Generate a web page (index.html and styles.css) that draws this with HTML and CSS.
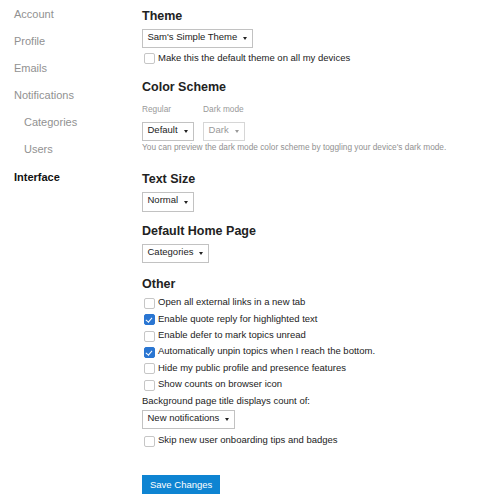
FILE: index.html
```html
<!DOCTYPE html>
<html lang="en">
<head>
  <meta charset="UTF-8" />
  <meta name="viewport" content="width=device-width, initial-scale=1.0" />
  <title>Interface Preferences</title>
  <link rel="stylesheet" href="styles.css">
</head>
<body>
  <div class="page">
    <ul class="sidebar">
      <li class="nav-item">Account</li>
      <li class="nav-item">Profile</li>
      <li class="nav-item">Emails</li>
      <li class="nav-item">Notifications</li>
      <li class="nav-item sub">Categories</li>
      <li class="nav-item sub">Users</li>
      <li class="nav-item active">Interface</li>
    </ul>

    <div class="main">
      <h2 class="heading theme-heading">Theme</h2>
      <div class="select">Sam's Simple Theme<span class="caret"></span></div>
      <div class="check-row theme-check"><span class="box"></span>Make this the default theme on all my devices</div>

      <h2 class="heading scheme-heading">Color Scheme</h2>
      <div class="scheme">
        <div class="scheme-col">
          <span class="field-label">Regular</span>
          <div class="select">Default<span class="caret"></span></div>
        </div>
        <div class="scheme-col">
          <span class="field-label">Dark mode</span>
          <div class="select disabled">Dark<span class="caret"></span></div>
        </div>
      </div>
      <p class="hint">You can preview the dark mode color scheme by toggling your device's dark mode.</p>

      <h2 class="heading size-heading">Text Size</h2>
      <div class="select">Normal<span class="caret"></span></div>

      <h2 class="heading home-heading">Default Home Page</h2>
      <div class="select">Categories<span class="caret"></span></div>

      <h2 class="heading other-heading">Other</h2>
      <div class="other-list">
        <div class="check-row"><span class="box"></span>Open all external links in a new tab</div>
        <div class="check-row"><span class="box checked"></span>Enable quote reply for highlighted text</div>
        <div class="check-row"><span class="box"></span>Enable defer to mark topics unread</div>
        <div class="check-row"><span class="box checked"></span>Automatically unpin topics when I reach the bottom.</div>
        <div class="check-row"><span class="box"></span>Hide my public profile and presence features</div>
        <div class="check-row"><span class="box"></span>Show counts on browser icon</div>
      </div>
      <p class="count-label">Background page title displays count of:</p>
      <div class="select">New notifications<span class="caret"></span></div>
      <div class="check-row skip-check"><span class="box"></span>Skip new user onboarding tips and badges</div>

      <button class="save-btn">Save Changes</button>
    </div>
  </div>
</body>
</html>
```

FILE: styles.css
```css
body {
  margin: 0;
  font-family: "Liberation Sans", Arial, sans-serif;
  color: #222;
  background-color: #fff;
}

.page {
  display: flex;
}

.sidebar {
  list-style: none;
  margin: 0;
  padding: 1px 0 0 0;
  width: 142px;
  flex-shrink: 0;
}

.nav-item {
  font-size: 11px;
  line-height: 27.1px;
  color: #919191;
  padding-left: 14px;
}

.nav-item.sub {
  padding-left: 24px;
}

.nav-item.active {
  color: #111;
  font-weight: bold;
}

.main {
  flex: 1;
  font-size: 9.5px;
}

.heading {
  font-size: 12.5px;
  line-height: 16px;
  font-weight: bold;
  color: #222;
  margin: 0;
}

.theme-heading { margin-top: 7.5px; }
.scheme-heading { margin-top: 13.5px; }
.size-heading { margin-top: 18px; }
.home-heading { margin-top: 11px; }
.other-heading { margin-top: 12.5px; }

.select {
  display: inline-flex;
  align-items: flex-start;
  border: 1px solid #c2c2c2;
  padding: 0 5px 4.5px 4.5px;
  line-height: 13px;
  color: #222;
  background: #fff;
  margin-top: 5px;
  vertical-align: top;
}

.select .caret {
  width: 0;
  height: 0;
  margin: 7.5px 0 0 6px;
  border-left: 2.5px solid transparent;
  border-right: 2.5px solid transparent;
  border-top: 3px solid #222;
}

.select.disabled {
  color: #999;
  border-color: #d6d6d6;
}

.select.disabled .caret {
  border-top-color: #999;
}

.check-row {
  display: flex;
  align-items: center;
  height: 16.3px;
  line-height: 16.3px;
  gap: 3.5px;
}

.box {
  width: 9px;
  height: 9px;
  margin: 2px 0 0 1.5px;
  border: 1px solid #c6c6c6;
  border-radius: 2px;
  background: #fff;
  flex-shrink: 0;
  position: relative;
}

.box.checked {
  background: #2a76d2;
  border-color: #2a76d2;
}

.box.checked::after {
  content: "";
  position: absolute;
  left: 2.5px;
  top: 0.5px;
  width: 2.5px;
  height: 5px;
  border-right: 1.6px solid #fff;
  border-bottom: 1.6px solid #fff;
  transform: rotate(40deg);
}

.theme-check { margin-top: 1.5px; }

.scheme {
  display: flex;
  gap: 9.5px;
  margin-top: 7.3px;
}

.scheme-col {
  display: flex;
  flex-direction: column;
  align-items: flex-start;
}

.scheme-col .select {
  margin-top: 7.4px;
}

.field-label {
  font-size: 8.3px;
  line-height: 12px;
  color: #999;
}

.hint {
  margin: 0;
  font-size: 8.3px;
  line-height: 12px;
  color: #919191;
}

.other-list {
  margin-top: 2.5px;
}

.count-label {
  margin: 1.3px 0 0 0;
  line-height: 14px;
}

.count-label + .select {
  margin-top: 2.3px;
}

.skip-check { margin-top: 2.6px; }

.save-btn {
  display: block;
  margin-top: 26.8px;
  height: 19px;
  padding: 0 8px;
  border: none;
  background: #0e84d2;
  color: #fff;
  font-family: "Liberation Sans", Arial, sans-serif;
  font-size: 9.5px;
  line-height: 19px;
}
```
